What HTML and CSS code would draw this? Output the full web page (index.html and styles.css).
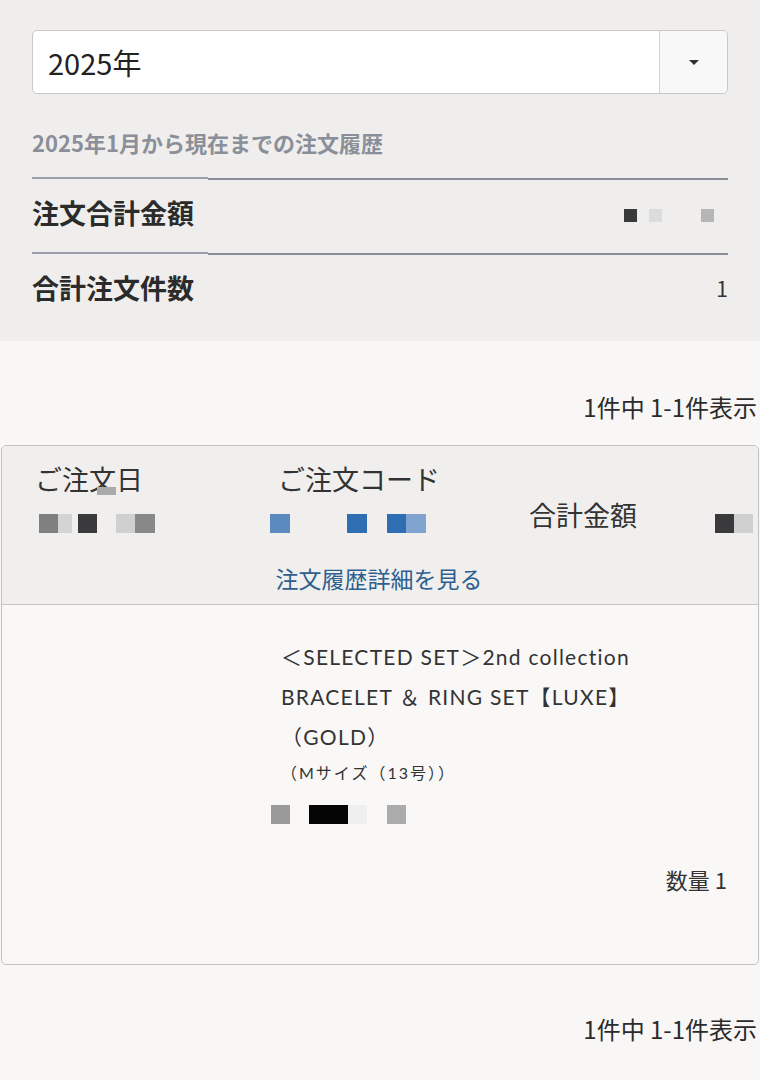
FILE: index.html
```html
<!DOCTYPE html>
<html lang="ja">
<head>
<meta charset="utf-8">
<title>注文履歴</title>
<link rel="stylesheet" href="styles.css">
</head>
<body>
<section class="summary">
  <div class="select">
    <div class="select-value">2025年</div>
    <div class="select-btn"><span class="caret"></span></div>
  </div>
  <p class="period">2025年1月から現在までの注文履歴</p>
  <div class="rule"><span class="rule-a"></span><span class="rule-b"></span></div>
  <div class="stat-row">
    <span class="stat-label">注文合計金額</span>
    <span class="blur-group stat-blur">
      <i class="sq sq13 c-dark"></i><i class="sq sq13 c-light g12"></i><i class="sq sq13 c-mid g39"></i>
    </span>
  </div>
  <div class="rule"><span class="rule-a"></span><span class="rule-b"></span></div>
  <div class="stat-row">
    <span class="stat-label">合計注文件数</span>
    <span class="stat-value">1</span>
  </div>
</section>

<p class="count">1件中 1-1件表示</p>

<article class="card">
  <div class="card-head">
    <div class="cols">
      <div class="col col-date">
        <div class="col-label">ご注文日<i class="smudge"></i></div>
        <div class="blur-group vals date-vals">
          <i class="sq sq19 c-g80"></i><i class="sq w14 c-gd4"></i><i class="sq sq19 c-dark g6"></i><i class="sq sq19 c-gd0 g19"></i><i class="sq w20 c-g88"></i>
        </div>
      </div>
      <div class="col col-code">
        <div class="col-label">ご注文コード</div>
        <div class="blur-group vals code-vals">
          <i class="sq w20 c-b1"></i><i class="sq w20 c-b2 g57"></i><i class="sq sq19 c-b2 g20"></i><i class="sq w20 c-b3"></i>
        </div>
      </div>
      <div class="col col-total">
        <div class="col-label">合計金額</div>
        <div class="blur-group total-vals">
          <i class="sq sq19 c-dark"></i><i class="sq sq19 c-gcc"></i>
        </div>
      </div>
    </div>
    <a class="detail-link" href="#">注文履歴詳細を見る</a>
  </div>
  <div class="card-body">
    <div class="product">
      <p class="product-name">＜SELECTED SET＞2nd collection<br>BRACELET ＆ RING SET【LUXE】<br>（GOLD）</p>
      <p class="product-opt">（Mサイズ（13号））</p>
      <div class="blur-group price">
        <i class="sq sq19 c-g99"></i><i class="sq w39 c-black g19"></i><i class="sq sq19 c-gee"></i><i class="sq sq19 c-gaa g20"></i>
      </div>
    </div>
    <p class="qty">数量 1</p>
  </div>
</article>

<p class="count count-bottom">1件中 1-1件表示</p>
</body>
</html>
```

FILE: styles.css
```css
* { box-sizing: border-box; }
html, body { margin: 0; padding: 0; }
body {
  background: #f8f7f6;
  color: #333;
  font-family: "Noto Sans CJK JP", "Noto Sans", sans-serif;
  width: 760px;
}
p { margin: 0; }

.summary {
  background: #efeeed;
  padding: 30px 32px 0 32px;
  height: 341px;
}
.select {
  display: flex;
  height: 64px;
  background: #fff;
  border: 1px solid #c9c9c9;
  border-radius: 5px;
  width: 696px;
}
.select-value {
  flex: 1;
  display: flex;
  align-items: center;
  padding-left: 15px;
  font-size: 29px;
  color: #222;
}
.select-btn {
  width: 68px;
  border-left: 1px solid #d2d2d2;
  background: #f8f8f8;
  border-radius: 0 5px 5px 0;
  display: flex;
  align-items: center;
  justify-content: center;
}
.caret {
  width: 0; height: 0;
  border-left: 5px solid transparent;
  border-right: 5px solid transparent;
  border-top: 5px solid #333;
}
.period {
  margin-top: 35px;
  font-size: 22px;
  line-height: 26px;
  font-weight: 700;
  color: #8a8f99;
  height: 26px;
}
.rule {
  display: flex;
  margin-top: 22px;
  height: 3px;
  width: 696px;
}
.rule-a { width: 176px; height: 2px; background: #9a9ea8; }
.rule-b { flex: 1; height: 2px; margin-top: 1px; background: #8b8f99; }
.stat-row + .rule { margin-top: 0; }
.stat-row {
  display: flex;
  align-items: center;
  justify-content: space-between;
  height: 72px;
  padding-bottom: 7px;
  width: 696px;
}
.stat-label {
  font-size: 27px;
  font-weight: 700;
  color: #2b2b2b;
}
.stat-value { font-size: 21px; padding-right: 0; }
.stat-blur { padding-right: 14px; margin-top: 6px; }

.blur-group { display: flex; }
.sq { display: block; }
.sq13 { width: 13px; height: 13px; }
.sq19 { width: 19px; height: 19px; }
.w14 { width: 14px; height: 19px; }
.w20 { width: 20px; height: 19px; }
.w39 { width: 39px; height: 19px; }
.g6 { margin-left: 6px; }
.g12 { margin-left: 12px; }
.g19 { margin-left: 19px; }
.g20 { margin-left: 20px; }
.g39 { margin-left: 39px; }
.g57 { margin-left: 57px; }
.c-dark { background: #3a3a3c; }
.c-light { background: #dcdcdc; }
.c-mid { background: #b6b6b6; }
.c-g80 { background: #808080; }
.c-gd4 { background: #d4d4d4; }
.c-gd0 { background: #d0d0d0; }
.c-g88 { background: #888; }
.c-gcc { background: #cfcfcf; }
.c-b1 { background: #5a8abf; }
.c-b2 { background: #2f6eb3; }
.c-b3 { background: #80a3cf; }
.c-g99 { background: #9a9a9a; }
.c-black { background: #050505; }
.c-gee { background: #efefef; }
.c-gaa { background: #ababab; }

.count {
  text-align: right;
  font-size: 24px;
  line-height: 30px;
  padding-right: 3px;
  margin-top: 51px;
  color: #2b2b2b;
}
.count-bottom { margin-top: 49px; }

.card {
  margin: 23px 1px 0 1px;
  border: 1px solid #c2c2c2;
  border-radius: 5px;
  overflow: hidden;
  background: #f9f8f7;
}
.card-head {
  background: #f0efee;
  border-bottom: 1px solid #c4c4c4;
  padding-top: 17px;
  padding-bottom: 11px;
}
.cols { display: flex; }
.col-label {
  font-size: 27px;
  line-height: 32px;
  color: #333;
  white-space: nowrap;
  position: relative;
}
.col-date { width: 276px; padding-left: 33px; }
.col-code { width: 251px; }
.col-total { flex: 1; display: flex; margin-top: 36px; }
.col-total .col-label { width: 186px; }
.vals { margin-top: 19px; }
.date-vals { margin-left: 4px; }
.code-vals { margin-left: -8px; }
.total-vals { margin-top: 15px; }
.smudge {
  position: absolute;
  left: 62px; top: 24px;
  width: 19px; height: 8px;
  background: #aaa;
}
.detail-link {
  display: block;
  margin-top: 30px;
  text-align: center;
  font-size: 23px;
  line-height: 30px;
  color: #2e5f8f;
  text-decoration: none;
  padding-right: 2px;
}

.card-body { padding: 32px 31px 70px 0; }
.product { padding-left: 279px; }
.product-name {
  font-family: Lato, "Noto Sans CJK JP", sans-serif;
  font-size: 21px;
  line-height: 40px;
  letter-spacing: 1.25px;
  color: #333;
}
.product-opt {
  font-family: Lato, "Noto Sans CJK JP", sans-serif;
  font-size: 16px;
  line-height: 24px;
  letter-spacing: 2px;
  margin-top: 4px;
  color: #333;
}
.price { margin-top: 20px; margin-left: -10px; }
.qty {
  margin-top: 40px;
  text-align: right;
  font-size: 22px;
  line-height: 30px;
  color: #333;
}
```
